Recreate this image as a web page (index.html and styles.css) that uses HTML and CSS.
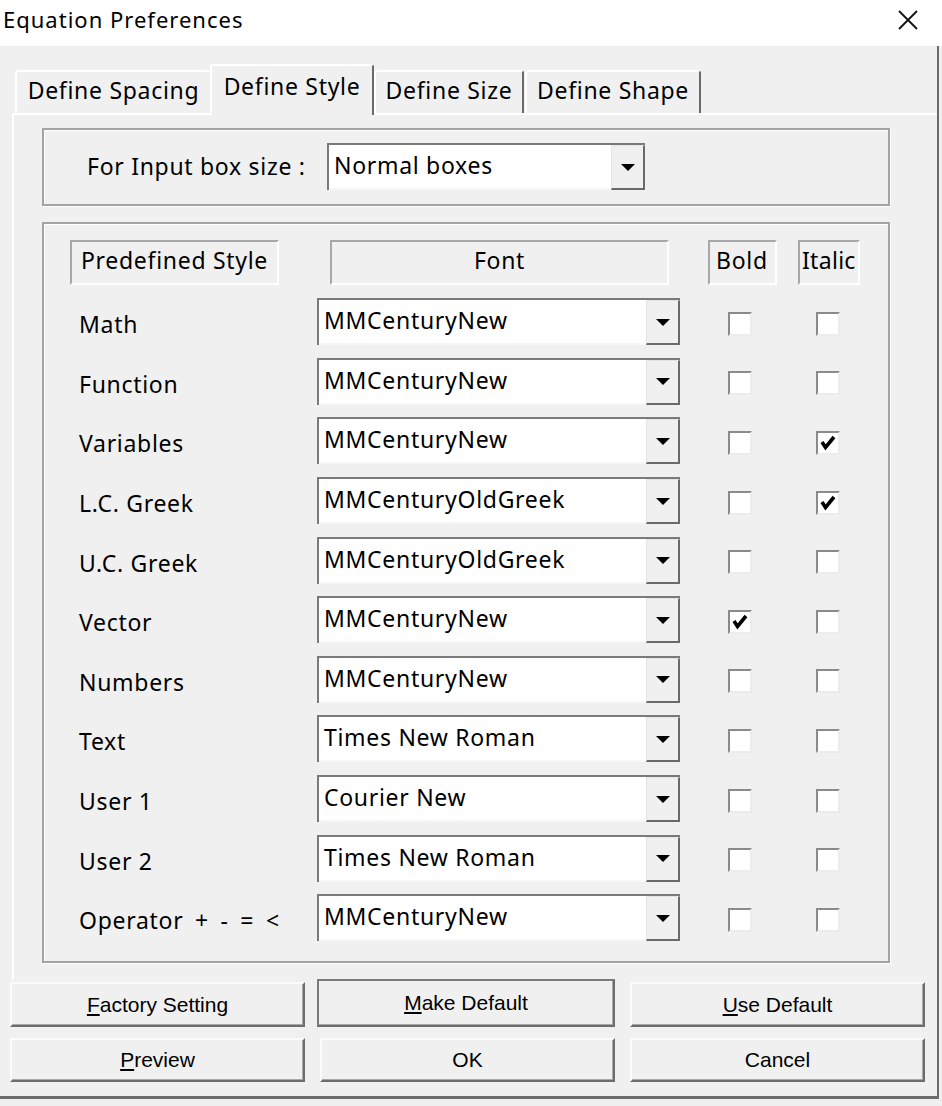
FILE: index.html
```html
<!DOCTYPE html>
<html>
<head>
<meta charset="utf-8">
<title>Equation Preferences</title>
<link rel="stylesheet" href="styles.css">
</head>
<body>
<div class="titlebar">
  <span class="title">Equation Preferences</span>
  <svg class="close" viewBox="0 0 20 20" width="20" height="20"><path d="M1 1 L19 19 M19 1 L1 19" stroke="#111" stroke-width="1.8" fill="none"/></svg>
</div>
<div class="frame">
  <div class="tabs">
    <div class="tab tab-spacing">Define Spacing</div>
    <div class="tab tab-style active">Define Style</div>
    <div class="tab tab-size">Define Size</div>
    <div class="tab tab-shape">Define Shape</div>
  </div>
  <div class="panel">
    <div class="group group-input">
      <span class="input-label">For Input box size :</span>
      <div class="combo combo-size"><span class="combo-text">Normal boxes</span><span class="combo-btn"><span class="arrow"></span></span></div>
    </div>
    <div class="group group-styles">
      <div class="header">
        <div class="hcell h-style">Predefined Style</div>
        <div class="hcell h-font">Font</div>
        <div class="hcell h-bold">Bold</div>
        <div class="hcell h-italic">Italic</div>
      </div>
      <div class="rows">
        <span class="row-label">Math</span>
        <div class="combo"><span class="combo-text">MMCenturyNew</span><span class="combo-btn"><span class="arrow"></span></span></div>
        <span></span><span class="cb"></span><span></span><span class="cb"></span>

        <span class="row-label">Function</span>
        <div class="combo"><span class="combo-text">MMCenturyNew</span><span class="combo-btn"><span class="arrow"></span></span></div>
        <span></span><span class="cb"></span><span></span><span class="cb"></span>

        <span class="row-label">Variables</span>
        <div class="combo"><span class="combo-text">MMCenturyNew</span><span class="combo-btn"><span class="arrow"></span></span></div>
        <span></span><span class="cb"></span><span></span><span class="cb"><svg viewBox="0 0 20 20" width="20" height="20"><path d="M4 9 L7.5 14.5 L16 4" fill="none" stroke="#000" stroke-width="3.6"/></svg></span>

        <span class="row-label">L.C. Greek</span>
        <div class="combo"><span class="combo-text">MMCenturyOldGreek</span><span class="combo-btn"><span class="arrow"></span></span></div>
        <span></span><span class="cb"></span><span></span><span class="cb"><svg viewBox="0 0 20 20" width="20" height="20"><path d="M4 9 L7.5 14.5 L16 4" fill="none" stroke="#000" stroke-width="3.6"/></svg></span>

        <span class="row-label">U.C. Greek</span>
        <div class="combo"><span class="combo-text">MMCenturyOldGreek</span><span class="combo-btn"><span class="arrow"></span></span></div>
        <span></span><span class="cb"></span><span></span><span class="cb"></span>

        <span class="row-label">Vector</span>
        <div class="combo"><span class="combo-text">MMCenturyNew</span><span class="combo-btn"><span class="arrow"></span></span></div>
        <span></span><span class="cb"><svg viewBox="0 0 20 20" width="20" height="20"><path d="M4 9 L7.5 14.5 L16 4" fill="none" stroke="#000" stroke-width="3.6"/></svg></span><span></span><span class="cb"></span>

        <span class="row-label">Numbers</span>
        <div class="combo"><span class="combo-text">MMCenturyNew</span><span class="combo-btn"><span class="arrow"></span></span></div>
        <span></span><span class="cb"></span><span></span><span class="cb"></span>

        <span class="row-label">Text</span>
        <div class="combo"><span class="combo-text">Times New Roman</span><span class="combo-btn"><span class="arrow"></span></span></div>
        <span></span><span class="cb"></span><span></span><span class="cb"></span>

        <span class="row-label">User 1</span>
        <div class="combo"><span class="combo-text">Courier New</span><span class="combo-btn"><span class="arrow"></span></span></div>
        <span></span><span class="cb"></span><span></span><span class="cb"></span>

        <span class="row-label">User 2</span>
        <div class="combo"><span class="combo-text">Times New Roman</span><span class="combo-btn"><span class="arrow"></span></span></div>
        <span></span><span class="cb"></span><span></span><span class="cb"></span>

        <span class="row-label label-op">Operator + - = &lt;</span>
        <div class="combo"><span class="combo-text">MMCenturyNew</span><span class="combo-btn"><span class="arrow"></span></span></div>
        <span></span><span class="cb"></span><span></span><span class="cb"></span>
      </div>
    </div>
  </div>
  <div class="buttons">
    <div class="btn"><span><u>F</u>actory Setting</span></div>
    <div class="btn btn-default"><span><u>M</u>ake Default</span></div>
    <div class="btn"><span><u>U</u>se Default</span></div>
    <div class="btn"><span><u>P</u>review</span></div>
    <div class="btn"><span>OK</span></div>
    <div class="btn"><span>Cancel</span></div>
  </div>
</div>
</body>
</html>
```
FILE: styles.css
```css
* { box-sizing: border-box; }

body {
  margin: 0;
  width: 942px;
  height: 1106px;
  overflow: hidden;
  background: #f0f0f0;
  font-family: "Noto Sans", "Open Sans", sans-serif;
  font-size: 23px;
  letter-spacing: 0.7px;
  color: #000;
}

.titlebar {
  height: 46px;
  background: #fff;
  display: flex;
  justify-content: space-between;
  align-items: flex-start;
}

.title {
  padding-left: 3px;
  line-height: 38px;
  font-size: 22px;
  letter-spacing: 1px;
}

.close {
  margin: 10px 24px 0 0;
}

.frame {
  width: 939px;
  height: 1053px;
  border-right: 2px solid #6b6b6b;
  border-bottom: 3px solid #6b6b6b;
}

.tabs {
  height: 67px;
  padding-left: 15px;
  display: flex;
  align-items: flex-end;
}

.tab {
  height: 43px;
  background: #f0f0f0;
  border-top: 2px solid #fff;
  border-left: 2px solid #fff;
  border-right: 2px solid #6b6b6b;
  border-radius: 3px 3px 0 0;
  display: flex;
  align-items: center;
  justify-content: center;
  padding-bottom: 5px;
  white-space: nowrap;
}

.tab-spacing { width: 195px; border-right: none; }
.tab-style { width: 164px; }
.tab-size { width: 150px; }
.tab-shape { width: 176px; margin-left: 1px; }

.tab.active {
  height: 51px;
  margin-bottom: -2px;
  position: relative;
  z-index: 1;
  padding-bottom: 10px;
}

.panel {
  margin-left: 12px;
  height: 867px;
  border-top: 2px solid #fff;
  border-left: 2px solid #fff;
  padding: 13px 0 0 28px;
}

.group {
  width: 848px;
  border: 2px solid #a3a3a3;
  box-shadow: inset 1px 1px 0 #fff, 1px 1px 0 #fff;
}

.group-input {
  height: 78px;
  display: grid;
  grid-template-columns: 240px 318px;
  align-items: start;
  padding: 13px 0 0 43px;
}

.input-label {
  line-height: 47px;
  white-space: nowrap;
}

.group-styles {
  margin-top: 16px;
  height: 741px;
  padding: 16px 0 0 0;
}

.header {
  display: flex;
  margin-left: 26px;
}

.hcell {
  height: 45px;
  border-top: 2px solid #a8a8a8;
  border-left: 2px solid #a8a8a8;
  border-right: 2px solid #fff;
  border-bottom: 2px solid #fff;
  display: flex;
  align-items: center;
  padding-bottom: 5px;
  white-space: nowrap;
}

.h-style { width: 209px; padding-left: 9px; }
.h-font { width: 339px; margin-left: 51px; justify-content: center; }
.h-bold { width: 69px; margin-left: 39px; padding-left: 6px; }
.h-italic { width: 62px; margin-left: 21px; padding-left: 2px; letter-spacing: 0.3px; }

.rows {
  margin-top: 7px;
  padding-left: 35px;
  display: grid;
  grid-template-columns: 238px 363px 48px 24px 64px 24px;
  grid-auto-rows: 59.6px;
  align-items: center;
}

.row-label {
  padding-top: 5px;
  white-space: nowrap;
}

.label-op {
  word-spacing: 5px;
}

.combo {
  height: 47px;
  display: flex;
  background: #fff;
  border-top: 2px solid #7a7a7a;
  border-left: 2px solid #7a7a7a;
}

.combo-text {
  flex: 1;
  display: flex;
  align-items: center;
  padding-left: 5px;
  padding-bottom: 3px;
  border-bottom: 2px solid #f7f7f7;
  white-space: nowrap;
}

.combo-btn {
  width: 34px;
  background: #f0f0f0;
  border-top: 1px solid #e4e4e4;
  border-left: 1px solid #e4e4e4;
  border-right: 2px solid #6a6a6a;
  border-bottom: 2px solid #6a6a6a;
  display: flex;
  align-items: center;
  justify-content: center;
}

.arrow {
  width: 0;
  height: 0;
  border-left: 7px solid transparent;
  border-right: 7px solid transparent;
  border-top: 7px solid #000;
}

.cb {
  width: 24px;
  height: 24px;
  margin-top: 4px;
  background: #fff;
  border-top: 2px solid #8a8a8a;
  border-left: 2px solid #8a8a8a;
  border-right: 2px solid #ececec;
  border-bottom: 2px solid #ececec;
  display: flex;
  align-items: center;
  justify-content: center;
}

.buttons {
  margin-top: 2px;
  padding-left: 10px;
  display: grid;
  grid-template-columns: 295px 295px 295px;
  grid-template-rows: 45px 44px;
  column-gap: 15px;
  row-gap: 11px;
}

.btn {
  background: #f0f0f0;
  border-top: 2px solid #fbfbfb;
  border-left: 2px solid #fbfbfb;
  border-right: 2px solid #6d6d6d;
  border-bottom: 2px solid #6d6d6d;
  box-shadow: inset -1px -1px 0 #a8a8a8;
  display: flex;
  align-items: center;
  justify-content: center;
  font-family: "Liberation Sans", Arial, sans-serif;
  font-size: 21px;
  letter-spacing: 0;
}

.btn-default {
  margin-left: -3px;
  margin-top: -3px;
  border-top: 2px solid #7a7a7a;
  border-left: 2px solid #7a7a7a;
}
```
